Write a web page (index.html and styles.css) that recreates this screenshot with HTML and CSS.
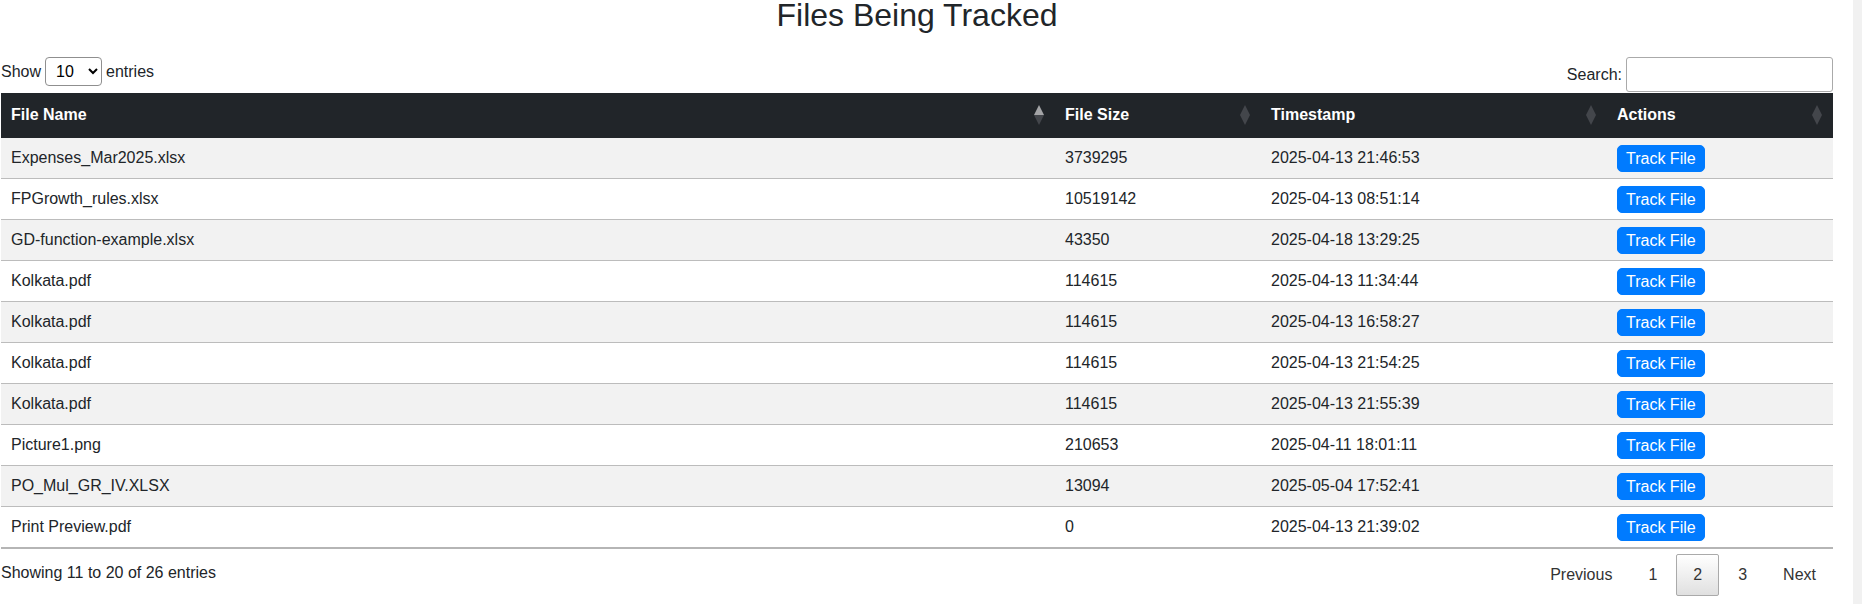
FILE: index.html
```html
<!DOCTYPE html>
<html lang="en">
<head>
<meta charset="utf-8">
<title>Files Being Tracked</title>
<link rel="stylesheet" href="styles.css">
</head>
<body>
<div class="page">
  <main class="main">
    <h1 class="title">Files Being Tracked</h1>
    <div class="controls">
      <label class="length">Show
        <select class="length-select"><option>10</option><option>25</option><option>50</option><option>100</option></select>
        entries</label>
      <label class="search">Search:<input class="search-input" type="search"></label>
    </div>
    <table class="files">
      <colgroup>
        <col class="c-name"><col class="c-size"><col class="c-time"><col class="c-act">
      </colgroup>
      <thead>
        <tr>
          <th><div class="th-in"><span>File Name</span>
            <svg class="sort" viewBox="0 0 10 20" width="10" height="20"><polygon class="up on" points="5,0 10,10 0,10"/><polygon class="down" points="0,10 10,10 5,20"/></svg></div></th>
          <th><div class="th-in"><span>File Size</span>
            <svg class="sort" viewBox="0 0 10 20" width="10" height="20"><polygon class="up" points="5,0 10,10 0,10"/><polygon class="down" points="0,10 10,10 5,20"/></svg></div></th>
          <th><div class="th-in"><span>Timestamp</span>
            <svg class="sort" viewBox="0 0 10 20" width="10" height="20"><polygon class="up" points="5,0 10,10 0,10"/><polygon class="down" points="0,10 10,10 5,20"/></svg></div></th>
          <th><div class="th-in"><span>Actions</span>
            <svg class="sort" viewBox="0 0 10 20" width="10" height="20"><polygon class="up" points="5,0 10,10 0,10"/><polygon class="down" points="0,10 10,10 5,20"/></svg></div></th>
        </tr>
      </thead>
      <tbody>
        <tr><td>Expenses_Mar2025.xlsx</td><td>3739295</td><td>2025-04-13 21:46:53</td><td><button class="track">Track File</button></td></tr>
        <tr><td>FPGrowth_rules.xlsx</td><td>10519142</td><td>2025-04-13 08:51:14</td><td><button class="track">Track File</button></td></tr>
        <tr><td>GD-function-example.xlsx</td><td>43350</td><td>2025-04-18 13:29:25</td><td><button class="track">Track File</button></td></tr>
        <tr><td>Kolkata.pdf</td><td>114615</td><td>2025-04-13 11:34:44</td><td><button class="track">Track File</button></td></tr>
        <tr><td>Kolkata.pdf</td><td>114615</td><td>2025-04-13 16:58:27</td><td><button class="track">Track File</button></td></tr>
        <tr><td>Kolkata.pdf</td><td>114615</td><td>2025-04-13 21:54:25</td><td><button class="track">Track File</button></td></tr>
        <tr><td>Kolkata.pdf</td><td>114615</td><td>2025-04-13 21:55:39</td><td><button class="track">Track File</button></td></tr>
        <tr><td>Picture1.png</td><td>210653</td><td>2025-04-11 18:01:11</td><td><button class="track">Track File</button></td></tr>
        <tr><td>PO_Mul_GR_IV.XLSX</td><td>13094</td><td>2025-05-04 17:52:41</td><td><button class="track">Track File</button></td></tr>
        <tr><td>Print Preview.pdf</td><td>0</td><td>2025-04-13 21:39:02</td><td><button class="track">Track File</button></td></tr>
      </tbody>
    </table>
    <div class="footer">
      <div class="info">Showing 11 to 20 of 26 entries</div>
      <nav class="pager">
        <a class="pg">Previous</a>
        <a class="pg">1</a>
        <a class="pg current">2</a>
        <a class="pg">3</a>
        <a class="pg">Next</a>
      </nav>
    </div>
  </main>
  <div class="scrollbar"></div>
</div>
</body>
</html>
```

FILE: styles.css
```css
* { box-sizing: border-box; }
html, body {
  margin: 0;
  padding: 0;
  background: #fff;
}
body {
  font-family: "Liberation Sans", Arial, sans-serif;
  font-size: 16px;
  color: #212529;
}
.page {
  display: flex;
  min-height: 100vh;
  overflow: hidden;
}
.main {
  flex: 1;
  min-width: 0;
  padding: 0 20px 0 1px;
}
.scrollbar {
  width: 9px;
  flex: none;
  background: #f1f1f1;
}
.title {
  margin: 0;
  font-size: 32px;
  line-height: 30px;
  font-weight: normal;
  text-align: center;
  color: #212529;
}
.controls {
  margin-top: 27px;
  height: 35px;
  display: flex;
  justify-content: space-between;
  align-items: flex-start;
}
.length {
  display: flex;
  align-items: center;
  height: 29px;
  line-height: 18px;
}
.length-select {
  margin: 0 4px;
  width: 57px;
  height: 29px;
  font-family: "Liberation Sans", Arial, sans-serif;
  font-size: 16px;
  padding: 0 0 0 6px;
  color: #000;
  background: #fff;
  border: 1px solid #8f8f8f;
  border-radius: 4px;
}
.search {
  display: flex;
  align-items: center;
  height: 35px;
}
.search-input {
  margin-left: 4px;
  width: 207px;
  height: 35px;
  border: 1px solid #aaa;
  border-radius: 3px;
  padding: 5px;
  font-family: "Liberation Sans", Arial, sans-serif;
  font-size: 16px;
  background: #fff;
}
.files {
  margin-top: 1px;
  width: 100%;
  table-layout: fixed;
  border-collapse: separate;
  border-spacing: 0;
}
.c-name { width: 1054px; }
.c-size { width: 206px; }
.c-time { width: 346px; }
.c-act { width: 226px; }
.files th {
  background: #212529;
  color: #fff;
  font-weight: bold;
  text-align: left;
  padding: 10px 11px 11px 10px;
  line-height: 24px;
}
.th-in {
  display: flex;
  justify-content: space-between;
  align-items: center;
  height: 24px;
}
.sort { display: block; flex: none; }
.sort polygon { fill: #43464b; }
.sort polygon.on { fill: #a3a4a6; }
.files td {
  padding: 8px 10px;
  line-height: 24px;
  border-bottom: 1px solid #bcbcbc;
  vertical-align: top;
  white-space: nowrap;
}
.files tbody tr:nth-child(odd) td { background: #f2f2f2; }
.files tbody tr:last-child td { border-bottom: 2px solid #b5b5b5; }
.track {
  display: inline-block;
  vertical-align: top;
  margin: -1px 0 -2px;
  height: 27px;
  padding: 0 8px;
  border: 1px solid #007bff;
  border-radius: 5px;
  background: #007bff;
  color: #fff;
  font-family: "Liberation Sans", Arial, sans-serif;
  font-size: 16px;
  line-height: 25px;
}
.footer {
  display: flex;
  justify-content: space-between;
  align-items: flex-start;
}
.info {
  margin-top: 12px;
  line-height: 24px;
}
.pager {
  margin-top: 5px;
  display: flex;
}
.pg {
  display: block;
  margin-left: 2px;
  padding: 8px 16px;
  line-height: 24px;
  border: 1px solid transparent;
  border-radius: 2px;
  color: #333;
}
.pg.current {
  border-color: #aaa;
  background: linear-gradient(to bottom, #fff 0%, #e0e0e0 100%);
}
```
